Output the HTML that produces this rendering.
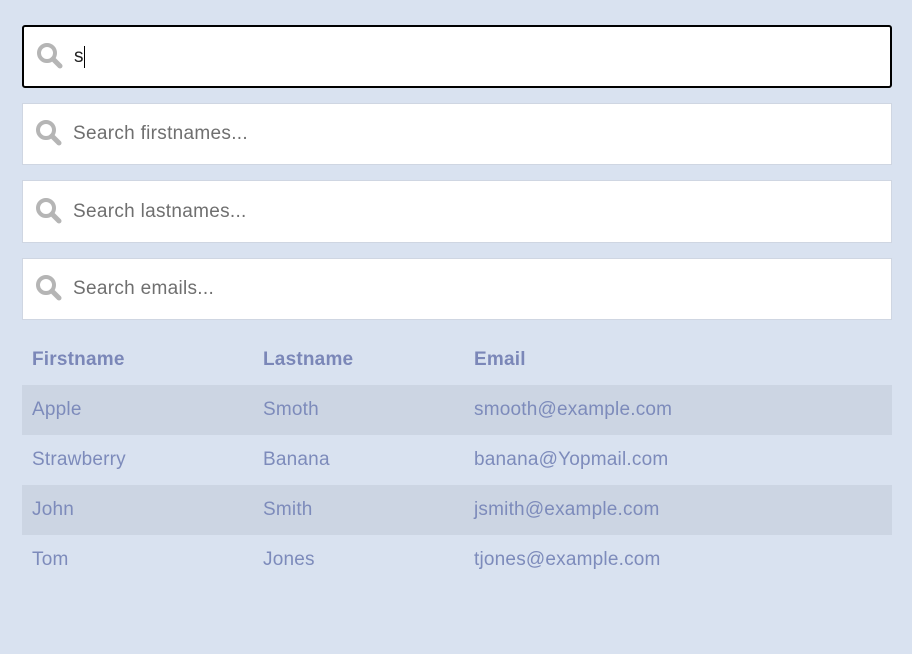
<!DOCTYPE html>
<html><head><style>
body{margin:0;background:#d9e2f0;font-family:"Liberation Sans",sans-serif;width:912px;height:654px;overflow:hidden}
.in{position:absolute;left:22px;width:870px;background:#fff;border:1px solid #cfd6e2;box-sizing:border-box}
.in.f{border:2px solid #000;border-radius:3px}
.in svg{position:absolute;left:11px;top:50%;margin-top:-16px}
.in span{position:absolute;left:50px;top:50%;transform:translateY(-50%);font-size:19px;color:#6f6f6f;letter-spacing:0.3px}
.row{position:absolute;left:22px;width:870px;height:50px;font-size:19px;color:#7d8bbb;letter-spacing:0.2px}
.row div{position:absolute;top:50%;transform:translateY(-50%)}
.s{background:#ccd5e3}
.h{font-weight:bold;color:#7b87b8}
</style></head><body>
<div class="in f" style="top:25px;height:63px"><svg width="30" height="30" viewBox="0 0 30 30"><circle cx="12" cy="12" r="8" fill="none" stroke="#b5b5b5" stroke-width="4"/><line x1="18" y1="18" x2="25" y2="25" stroke="#b5b5b5" stroke-width="5" stroke-linecap="round"/></svg><span style="color:#222;left:50px">s<span style="position:static;display:inline-block;width:1px;height:22px;background:#000;vertical-align:middle;transform:none"></span></span></div>
<div class="in" style="top:103px;height:62px"><svg width="30" height="30" viewBox="0 0 30 30"><circle cx="12" cy="12" r="8" fill="none" stroke="#b5b5b5" stroke-width="4"/><line x1="18" y1="18" x2="25" y2="25" stroke="#b5b5b5" stroke-width="5" stroke-linecap="round"/></svg><span>Search firstnames...</span></div>
<div class="in" style="top:180px;height:63px"><svg width="30" height="30" viewBox="0 0 30 30"><circle cx="12" cy="12" r="8" fill="none" stroke="#b5b5b5" stroke-width="4"/><line x1="18" y1="18" x2="25" y2="25" stroke="#b5b5b5" stroke-width="5" stroke-linecap="round"/></svg><span>Search lastnames...</span></div>
<div class="in" style="top:258px;height:62px"><svg width="30" height="30" viewBox="0 0 30 30"><circle cx="12" cy="12" r="8" fill="none" stroke="#b5b5b5" stroke-width="4"/><line x1="18" y1="18" x2="25" y2="25" stroke="#b5b5b5" stroke-width="5" stroke-linecap="round"/></svg><span>Search emails...</span></div>
<div class="row h" style="top:335px"><div style="left:10px">Firstname</div><div style="left:241px">Lastname</div><div style="left:452px">Email</div></div>
<div class="row s" style="top:385px"><div style="left:10px">Apple</div><div style="left:241px">Smoth</div><div style="left:452px">smooth@example.com</div></div>
<div class="row" style="top:435px"><div style="left:10px">Strawberry</div><div style="left:241px">Banana</div><div style="left:452px">banana@Yopmail.com</div></div>
<div class="row s" style="top:485px"><div style="left:10px">John</div><div style="left:241px">Smith</div><div style="left:452px">jsmith@example.com</div></div>
<div class="row" style="top:535px"><div style="left:10px">Tom</div><div style="left:241px">Jones</div><div style="left:452px">tjones@example.com</div></div>
</body></html>
